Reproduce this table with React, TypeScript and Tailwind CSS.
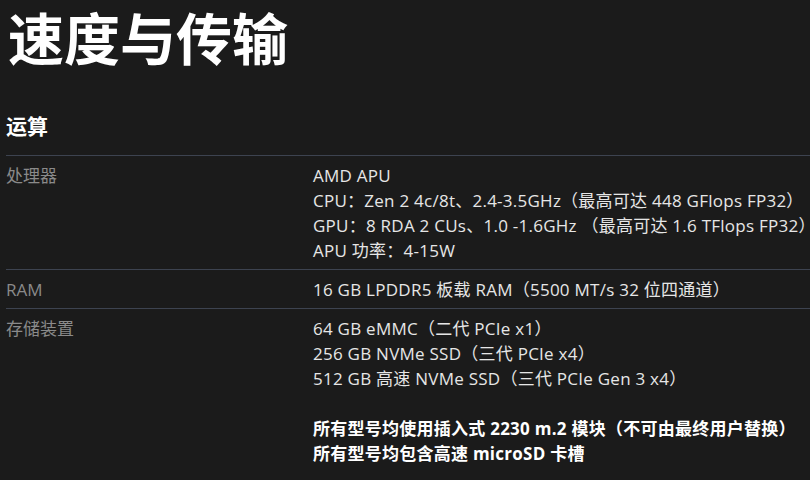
const rows: { label: string; lines: string[]; bold?: string[] }[] = [
  {
    label: "处理器",
    lines: [
      "AMD APU",
      "CPU：Zen 2 4c/8t、2.4-3.5GHz（最高可达 448 GFlops FP32）",
      "GPU：8 RDA 2 CUs、1.0 -1.6GHz （最高可达 1.6 TFlops FP32）",
      "APU 功率：4-15W",
    ],
  },
  {
    label: "RAM",
    lines: ["16 GB LPDDR5 板载 RAM（5500 MT/s 32 位四通道）"],
  },
  {
    label: "存储装置",
    lines: [
      "64 GB eMMC（二代 PCIe x1）",
      "256 GB NVMe SSD（三代 PCIe x4）",
      "512 GB 高速 NVMe SSD（三代 PCIe Gen 3 x4）",
    ],
    bold: [
      "所有型号均使用插入式 2230 m.2 模块（不可由最终用户替换）",
      "所有型号均包含高速 microSD 卡槽",
    ],
  },
];

export default function App() {
  return (
    <div
      className="w-[810px] h-[480px] overflow-hidden bg-[#1b1b1b] text-[#e6e6e6]"
      style={{ fontFamily: '"Open Sans", "Noto Sans CJK SC", sans-serif' }}
    >
      <div className="pl-[6px]">
        <h1 className="text-[56px] leading-none font-bold text-white pt-[10px] pl-[2px]">
          速度与传输
        </h1>
        <h2 className="text-[21px] font-bold text-white mt-[50px] leading-none">
          运算
        </h2>
        <div className="mt-[18px] border-t border-[#3d4350] w-[900px]">
          {rows.map((row, i) => (
            <div
              key={row.label}
              className={
                i < rows.length - 1
                  ? "flex border-b border-[#3d4350] pt-[7px] pb-[6px]"
                  : "flex pt-[7px] pb-[6px]"
              }
            >
              <div className="w-[307px] shrink-0 text-[17px] leading-[25px] text-[#8a8a8a]">
                {row.label}
              </div>
              <div className="text-[17px] leading-[25px] tracking-[0.25px] whitespace-nowrap">
                {row.lines.map((l) => (
                  <p key={l}>{l}</p>
                ))}
                {row.bold && (
                  <div className="mt-[25px] font-bold text-white">
                    {row.bold.map((l) => (
                      <p key={l}>{l}</p>
                    ))}
                  </div>
                )}
              </div>
            </div>
          ))}
        </div>
      </div>
    </div>
  );
}
